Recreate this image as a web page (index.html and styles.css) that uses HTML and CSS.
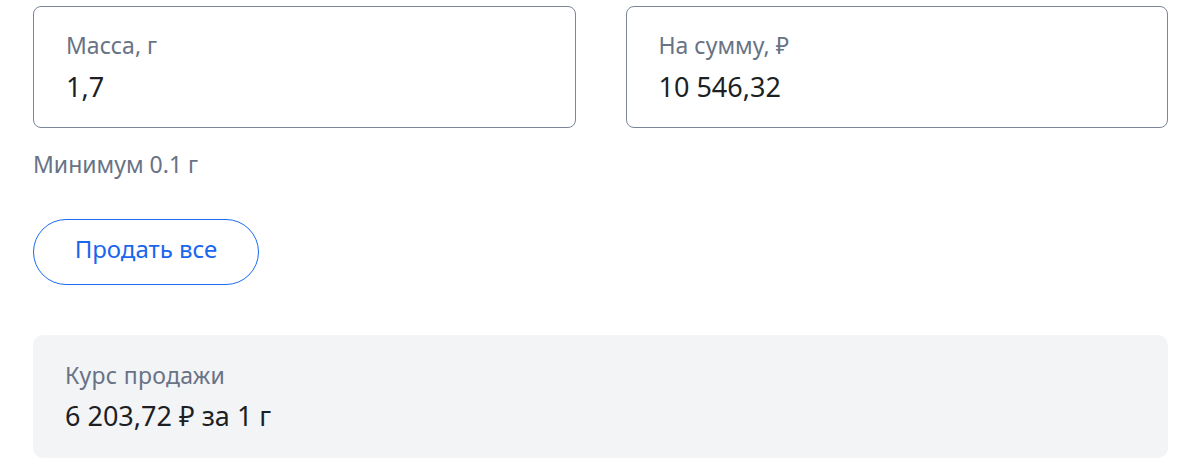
FILE: index.html
```html
<!DOCTYPE html>
<html lang="ru">
<head>
<meta charset="utf-8">
<link rel="stylesheet" href="styles.css">
</head>
<body>
<div class="form">
  <div class="fields">
    <div class="field">
      <div class="label">Масса, г</div>
      <div class="value">1,7</div>
    </div>
    <div class="field">
      <div class="label">На сумму, ₽</div>
      <div class="value">10 546,32</div>
    </div>
  </div>
  <div class="hint">Минимум 0.1 г</div>
  <button class="sell-all">Продать все</button>
  <div class="rate">
    <div class="label">Курс продажи</div>
    <div class="value">6 203,72 ₽ за 1 г</div>
  </div>
</div>
</body>
</html>
```
FILE: styles.css
```css
html, body {
  margin: 0;
  padding: 0;
  background: #ffffff;
}
body {
  font-family: "Noto Sans", "Open Sans", sans-serif;
  color: #1c1f24;
}
.form {
  padding: 6px 32px 0 33px;
  display: flex;
  flex-direction: column;
  align-items: flex-start;
}
.fields {
  display: grid;
  grid-template-columns: 1fr 1fr;
  gap: 50px;
  width: 1135px;
}
.field {
  border: 1px solid #7b8698;
  border-radius: 8px;
  height: 122px;
  box-sizing: border-box;
  padding: 22px 32px 0;
}
.label {
  font-size: 23px;
  line-height: 32px;
  color: #687385;
}
.value {
  font-size: 27px;
  line-height: 36px;
  color: #1c1f24;
  margin-top: 8px;
}
.hint {
  margin-top: 21px;
  font-size: 23px;
  line-height: 30px;
  color: #687385;
}
.sell-all {
  margin-top: 40px;
  height: 66px;
  width: 226px;
  border: 1.5px solid #1a6af3;
  border-radius: 33px;
  background: #fff;
  color: #1a66ee;
  font-family: inherit;
  font-size: 24px;
  line-height: 30px;
  padding: 0 0 7px;
  cursor: pointer;
}
.rate {
  margin-top: 50px;
  width: 1135px;
  height: 123px;
  box-sizing: border-box;
  background: #f3f4f6;
  border-radius: 10px;
  padding: 24px 32px 0;
}
.rate .label {
  letter-spacing: 0.3px;
}
.rate .value {
  margin-top: 7px;
}
```
